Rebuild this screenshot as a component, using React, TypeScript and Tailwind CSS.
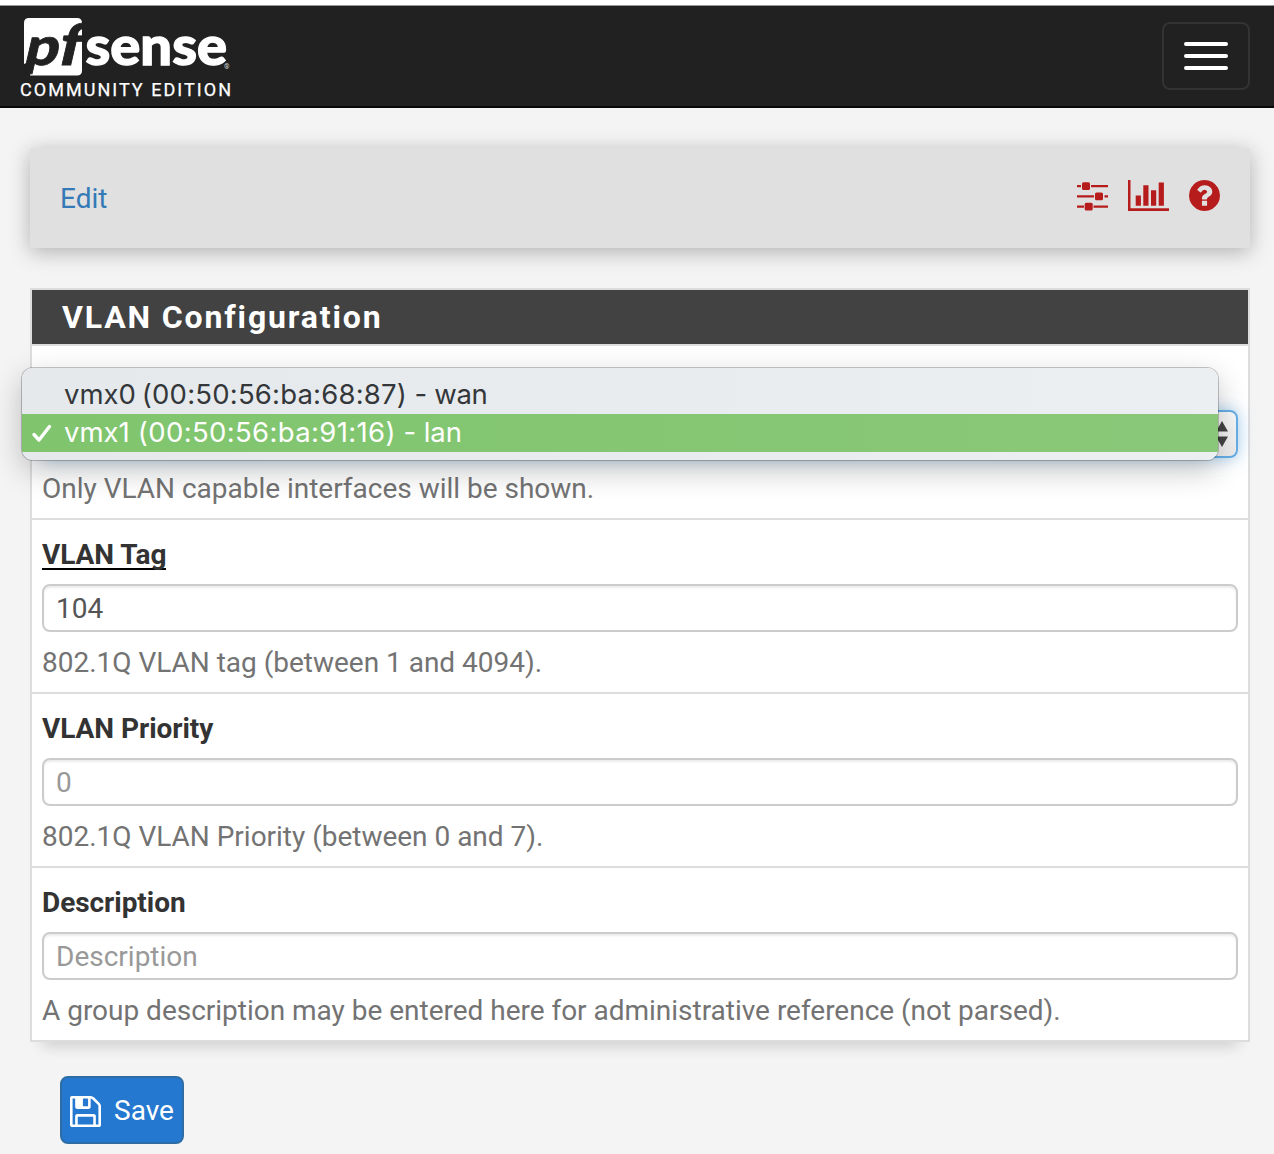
import React from "react";

function Logo() {
  return (
    <svg className="block" width="240" height="98" viewBox="0 5 240 98">
      <path d="M29 18H77q5 0 5 5V70.500q0 5-5 5H30L34 60 24 64V23q0-5 5-5z" fill="#fff" />
      <g fontFamily="Lato, sans-serif" fontWeight="900" fill="#212121" stroke="#212121" strokeWidth="0.800">
        <text transform="translate(22.500 65) skewX(-13)" fontSize="53" textLength="34" lengthAdjust="spacingAndGlyphs">p</text>
        <text transform="translate(56 65) skewX(-13)" fontSize="57" textLength="23" lengthAdjust="spacingAndGlyphs">f</text>
      </g>
      <text x="85.500" y="65" fontFamily="Lato, sans-serif" fontWeight="900" fontSize="53" stroke="#fff" strokeWidth="1.300" textLength="141.500" lengthAdjust="spacingAndGlyphs" fill="#fff">sense</text>
      <text x="224" y="69" fontFamily="Roboto, sans-serif" fontSize="7" fill="#ddd">®</text>
      <text x="20" y="96" fontFamily="Roboto, sans-serif" fontSize="18" textLength="211" fill="#fff" stroke="#fff" strokeWidth="0.250">COMMUNITY EDITION</text>
    </svg>
  );
}

function SlidersIcon() {
  return (
    <svg width="31" height="30" viewBox="0 0 31 30" fill="#b71c1c">
      <path d="M0 3h4v2.200H0zM14 3h17v2.200H14zM0 13.300h17v2.200H0zM27.500 13.300H31v2.200h-3.500zM0 23.600h7v2.200H0zM16.500 23.600H31v2.200H16.500z" />
      <rect x="5" y="0.300" width="8" height="7.700" rx="1.500" />
      <rect x="18" y="10.500" width="8" height="7.700" rx="1.500" />
      <rect x="7.700" y="20.700" width="8" height="7.700" rx="1.500" />
    </svg>
  );
}

function ChartIcon() {
  return (
    <svg width="41" height="31" viewBox="0 0 41 31" fill="#b71c1c">
      <path d="M0 0h2.500v28.300H41V31H0zM7.700 15.500h5.200v10.200H7.700zM15.300 5.200h5.200v20.500h-5.200zM23 10.300h5.200v15.400H23zM30.700 2.600h5.200v23.100h-5.200z" />
    </svg>
  );
}

function HelpIcon() {
  return (
    <svg width="31" height="31" viewBox="128 128 1536 1536" fill="#b71c1c">
      <path d="M1024 1376v-192q0-14-9-23t-23-9h-192q-14 0-23 9t-9 23v192q0 14 9 23t23 9h192q14 0 23-9t9-23zm256-672q0-88-55.500-163t-138.500-116-170-41q-243 0-371 213-15 24 8 42l132 100q7 6 19 6 16 0 25-12 53-68 86-92 34-24 86-24 48 0 85.500 26t37.500 59q0 38-20 61t-68 45q-63 28-115.500 86.500t-52.500 125.500v36q0 14 9 23t23 9h192q14 0 23-9t9-23q0-19 21.500-49.500t54.500-49.500q32-18 49-28.500t46-35 44.500-48 28-60.500 12.500-81zm384 192q0 209-103 385.500t-279.500 279.500-385.500 103-385.500-103-279.500-279.500-103-385.500 103-385.500 279.500-279.500 385.500-103 385.500 103 279.500 279.500 103 385.500z" />
    </svg>
  );
}

function SaveIcon() {
  return (
    <svg width="31" height="31" viewBox="128 128 1536 1536" fill="#fff" className="relative top-px">
      <path d="M512 1536h768v-384h-768v384zm896 0h128v-896q0-14-10-38.500t-20-34.500l-281-281q-10-10-34-20t-39-10v416q0 40-28 68t-68 28h-576q-40 0-68-28t-28-68v-416h-128v1280h128v-416q0-40 28-68t68-28h832q40 0 68 28t28 68v416zm-384-928v-320q0-13-9.500-22.500t-22.500-9.500h-192q-13 0-22.500 9.500t-9.500 22.500v320q0 13 9.500 22.500t22.500 9.500h192q13 0 22.500-9.500t9.500-22.500zm640 32v928q0 40-28 68t-68 28h-1344q-40 0-68-28t-28-68v-1344q0-40 28-68t68-28h928q40 0 88 20t76 48l280 280q28 28 48 76t20 88z" />
    </svg>
  );
}

type FieldProps = {
  label?: string;
  help: string;
  underline?: boolean;
  last?: boolean;
  children: React.ReactNode;
};

function Field({ label, help, underline, last, children }: FieldProps) {
  return (
    <div className={`px-[10px] pt-[14px] pb-[10px] ${last ? "" : "border-b-2 border-[#ddd]"}`}>
      <div className="h-10 text-[28px] leading-[42px] font-bold tracking-[-0.05px] text-[#333]">
        {label && <span className={underline ? "inline-block h-9 border-b-2 border-black" : ""}>{label}</span>}
      </div>
      <div className="relative mt-[10px] h-12">{children}</div>
      <div className="mt-[10px] h-10 text-[28px] leading-[42px] tracking-[-0.015px] whitespace-nowrap text-[#737373]">{help}</div>
    </div>
  );
}

const inputClass =
  "block h-12 w-full rounded-[8px] border-2 border-[#ccc] bg-white px-3 text-[28px] text-[#555] shadow-[inset_0_2px_2px_rgba(0,0,0,0.075)] outline-none placeholder:text-[#999]";

function InterfaceMenu() {
  return (
    <div className="absolute top-[-42px] left-[-20px] z-10 h-[92px] w-[1196px] rounded-[11px] bg-gradient-to-r from-[#e5e9ec] to-[#eceff2] font-[Inter] text-[27.5px] whitespace-pre shadow-[0_0_0_1px_rgba(0,0,0,0.22),0_10px_30px_rgba(0,0,0,0.24)]">
      <div className="h-[46px] pt-[7px] pl-[42px] leading-[38px] text-[#343739]">
        vmx0<span className="-ml-[2px] tracking-[0.2px]"> (00:50:56:ba:68:87)</span>
        <span className="tracking-[-0.3px]"> - wan</span>
      </div>
      <div className="flex h-[38px] items-center bg-gradient-to-r from-[#80c56e] to-[#89c878] text-white">
        <svg width="42" height="38" viewBox="0 0 42 38" fill="none" stroke="#fff" strokeWidth="3.400" strokeLinecap="round" strokeLinejoin="round">
          <path d="M12 20.500L17 26L27.500 12.500" />
        </svg>
        <span>
          vmx1<span className="tracking-[0.36px]"> (00:50:56:ba:91:16)</span>
          <span className="tracking-[-0.1px]"> - lan</span>
        </span>
      </div>
    </div>
  );
}

export default function App() {
  return (
    <div className="h-[1154px] w-[1274px] overflow-hidden bg-[#f4f4f4] font-[Roboto]">
      <div className="h-[5px] bg-white" />
      <header className="flex h-[103px] items-start justify-between border-t border-b-2 border-t-[#929793] border-b-[#080808] bg-[#212121]">
        <div className="-mt-px h-[100px]">
          <Logo />
        </div>
        <button aria-label="Toggle navigation" className="mt-4 mr-6 flex h-[68px] w-[88px] flex-col items-center justify-center gap-2 rounded-[8px] border-2 border-[#333]">
          <span className="h-1 w-11 rounded-[2px] bg-white" />
          <span className="h-1 w-11 rounded-[2px] bg-white" />
          <span className="h-1 w-11 rounded-[2px] bg-white" />
        </button>
      </header>

      <div className="my-10 ml-[30px] flex h-[100px] w-[1220px] items-center justify-between bg-[#e0e0e0] px-[30px] shadow-[0_4px_20px_rgba(0,0,0,0.28)]">
        <a className="pt-[2px] text-[28px] leading-10 text-[#337ab7]">Edit</a>
        <div className="-mt-[5px] flex items-center gap-5">
          <div className="pt-[2px]">
            <SlidersIcon />
          </div>
          <ChartIcon />
          <HelpIcon />
        </div>
      </div>

      <section className="ml-[30px] w-[1220px] border-2 border-[#ddd] bg-white shadow-[0_16px_14px_-12px_rgba(0,0,0,0.16)]">
        <h2 className="h-14 border-b-2 border-[#ddd] bg-[#424242] pl-[30px] text-[32px] leading-[54px] font-bold tracking-[1.85px] text-white">VLAN Configuration</h2>
        <Field help="Only VLAN capable interfaces will be shown.">
          <div className="flex h-12 items-center justify-end rounded-[8px] border-2 border-[#66afe9] bg-gradient-to-b from-[#fafafa] to-[#ededed] pr-[8px] shadow-[0_0_16px_rgba(102,175,233,0.6)]">
            <svg width="12" height="26" viewBox="0 0 12 26" fill="#444">
              <path d="M6 0L12 10.500H0zM0 15.500H12L6 26z" />
            </svg>
          </div>
          <InterfaceMenu />
        </Field>
        <Field label="VLAN Tag" underline help="802.1Q VLAN tag (between 1 and 4094).">
          <input className={inputClass} defaultValue="104" />
        </Field>
        <Field label="VLAN Priority" help="802.1Q VLAN Priority (between 0 and 7).">
          <input className={inputClass} placeholder="0" />
        </Field>
        <Field label="Description" last help="A group description may be entered here for administrative reference (not parsed).">
          <input className={inputClass} placeholder="Description" />
        </Field>
      </section>

      <button className="mt-[34px] ml-[60px] flex h-[68px] w-[124px] items-center gap-[13px] rounded-[8px] border-2 border-[#2e6da4] bg-[#2478d0] pl-2 text-[28px] text-white">
        <SaveIcon />
        <span className="pt-[2px]">Save</span>
      </button>
    </div>
  );
}
